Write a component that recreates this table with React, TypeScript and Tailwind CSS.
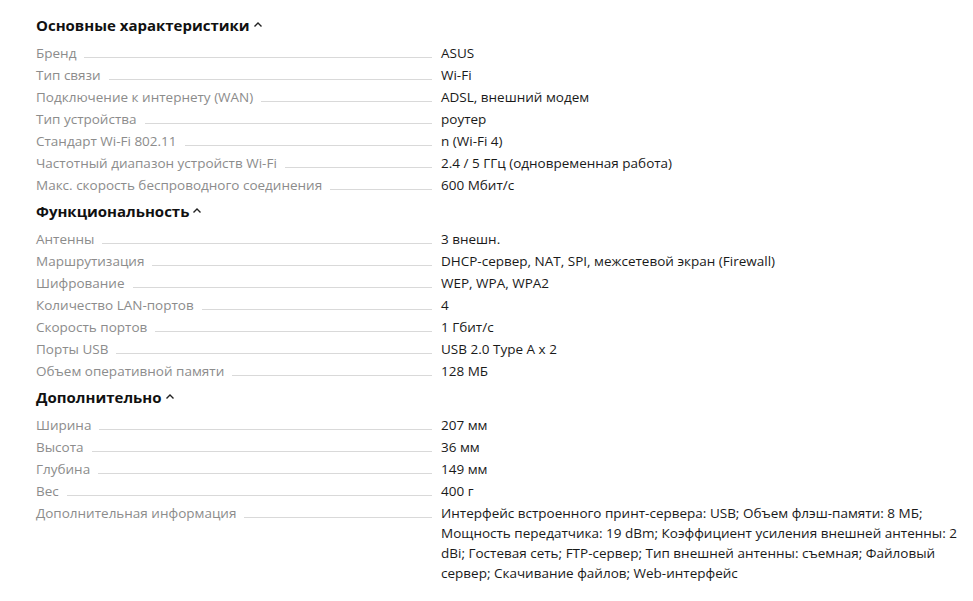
import React from "react";

type Row = [string, string];
const sections: { title: string; rows: Row[] }[] = [
  {
    title: "Основные характеристики",
    rows: [
      ["Бренд", "ASUS"],
      ["Тип связи", "Wi-Fi"],
      ["Подключение к интернету (WAN)", "ADSL, внешний модем"],
      ["Тип устройства", "роутер"],
      ["Стандарт Wi-Fi 802.11", "n (Wi-Fi 4)"],
      ["Частотный диапазон устройств Wi-Fi", "2.4 / 5 ГГц (одновременная работа)"],
      ["Макс. скорость беспроводного соединения", "600 Мбит/с"],
    ],
  },
  {
    title: "Функциональность",
    rows: [
      ["Антенны", "3 внешн."],
      ["Маршрутизация", "DHCP-сервер, NAT, SPI, межсетевой экран (Firewall)"],
      ["Шифрование", "WEP, WPA, WPA2"],
      ["Количество LAN-портов", "4"],
      ["Скорость портов", "1 Гбит/с"],
      ["Порты USB", "USB 2.0 Type A x 2"],
      ["Объем оперативной памяти", "128 МБ"],
    ],
  },
  {
    title: "Дополнительно",
    rows: [
      ["Ширина", "207 мм"],
      ["Высота", "36 мм"],
      ["Глубина", "149 мм"],
      ["Вес", "400 г"],
      [
        "Дополнительная информация",
        "Интерфейс встроенного принт-сервера: USB; Объем флэш-памяти: 8 МБ; Мощность передатчика: 19 dBm; Коэффициент усиления внешней антенны: 2 dBi; Гостевая сеть; FTP-сервер; Тип внешней антенны: съемная; Файловый сервер; Скачивание файлов; Web-интерфейс",
      ],
    ],
  },
];

function Chevron() {
  return (
    <svg width="10" height="7" viewBox="0 0 10 7" className="ml-[3px] mb-[2px]">
      <path d="M1.5 5.5 L5 2 L8.5 5.5" fill="none" stroke="#222" strokeWidth="1.4" />
    </svg>
  );
}

export default function App() {
  return (
    <div
      className="w-[973px] h-[601px] bg-white pl-[36px] pt-[14px] overflow-hidden"
      style={{ fontFamily: '"Open Sans", "Noto Sans", sans-serif' }}
    >
      {sections.map((s) => (
        <div key={s.title} className="mb-[5px]">
          <div className="flex items-center h-[22px] text-[15px] font-bold text-[#111]">
            {s.title}
            <Chevron />
          </div>
          <div className="mt-[7px]">
            {s.rows.map(([k, v]) => (
              <div key={k} className="grid grid-cols-[396px_520px] gap-x-[9px] mb-[2px] text-[13.5px] leading-[20px]">
                <div className="flex items-start h-[20px]">
                  <span className="text-[#8c8c8c] whitespace-nowrap">{k}</span>
                  <div className="flex-1 ml-[8px] mt-[14px] border-b border-[#d9d9d9]" />
                </div>
                <div className="text-[#1a1a1a]">{v}</div>
              </div>
            ))}
          </div>
        </div>
      ))}
    </div>
  );
}
